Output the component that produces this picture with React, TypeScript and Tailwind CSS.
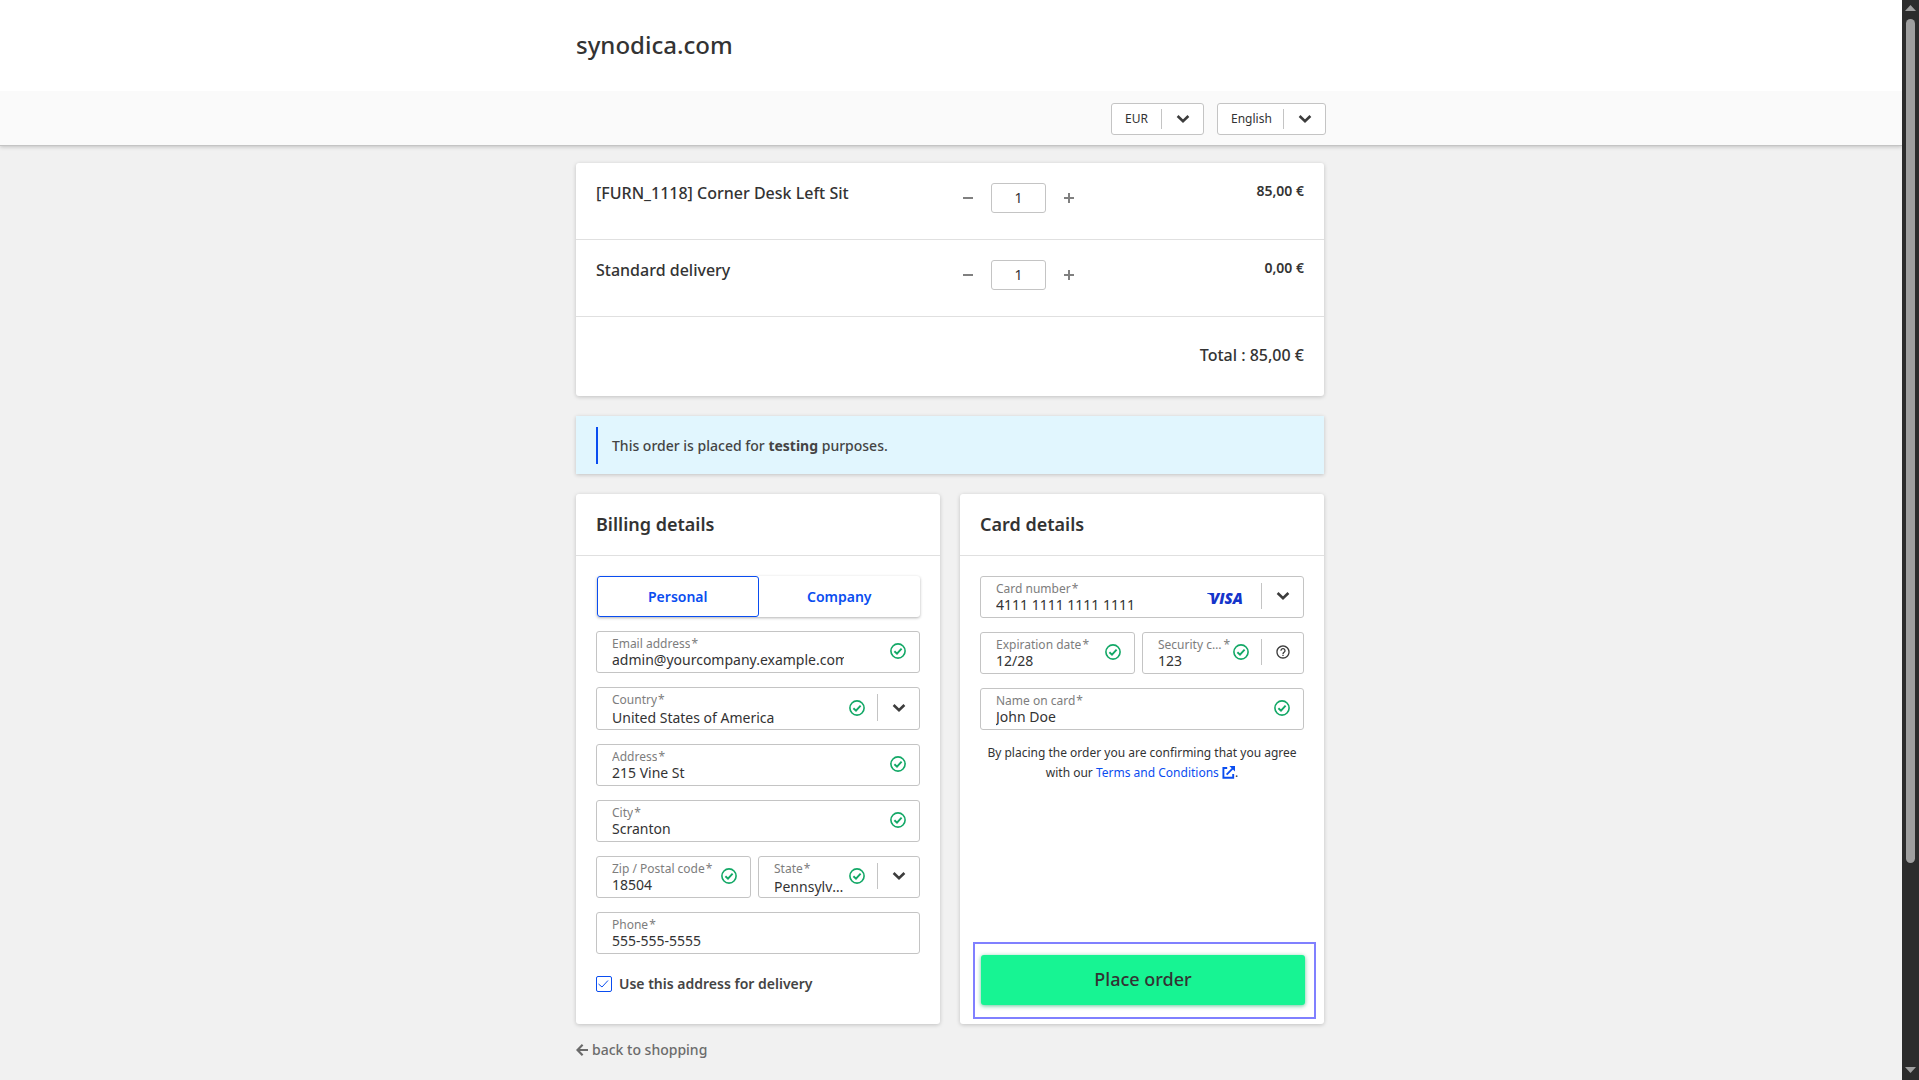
import { useState } from 'react';
import type { ReactNode } from 'react';
import { MdHelpOutline } from 'react-icons/md';

const products = [
  { id: 'desk', name: '[FURN_1118] Corner Desk Left Sit', price: '85,00 €' },
  { id: 'delivery', name: 'Standard delivery', price: '0,00 €' },
];

const Chevron = () => (
  <svg className="h-[14px] w-[14px] shrink-0" viewBox="0 0 14 14" fill="none" stroke="#3c3c3c" strokeWidth="2.6">
    <path d="M1.6 4 7 9.2l5.4-5.2" />
  </svg>
);

const Valid = () => (
  <svg className="h-4 w-4 shrink-0" viewBox="0 0 16 16" fill="none" stroke="#12a866">
    <circle cx="8" cy="8" r="7.1" strokeWidth="1.6" />
    <path d="M4.4 8.2 7 10.6l4.6-4.9" strokeWidth="1.9" />
  </svg>
);

const ArrowLeft = () => (
  <svg className="h-3 w-3" viewBox="0 0 12 12" fill="none" stroke="#6b6b6b" strokeWidth="2.2">
    <path d="M6.6.8 1.5 6l5.1 5.2M1.8 6H12" />
  </svg>
);

const ExternalLink = () => (
  <svg className="inline h-[13px] w-[13px] align-[-2px]" viewBox="0 0 13 13" fill="none" stroke="#0a4df0" strokeWidth="1.9">
    <path d="M5.2 2H1.4v9.8h9.8V8M4.6 8.6l6.2-6.2" />
    <path d="M7.4 0H13v5.6z" fill="#0a4df0" stroke="none" />
  </svg>
);

type FieldProps = {
  id: string;
  label: string;
  value: string;
  valid?: boolean;
  options?: string[];
  extra?: ReactNode;
  brand?: ReactNode;
  className?: string;
};

const Field = ({ id, label, value, valid = true, options, extra, brand, className = 'w-full' }: FieldProps) => (
  <div
    className={`flex rounded-[3px] border border-[#c4c4c4] bg-white ${
      options && className === 'w-full' ? 'h-[43px]' : 'h-[42px]'
    } ${className}`}
  >
    <div className="flex min-w-0 flex-1 flex-col pt-[3px] pl-[15px]">
      <label htmlFor={id} className="flex text-xs leading-[18px] text-[#7d7d7d]">
        <span className="truncate">{label}</span>
        <span className="pl-px">*</span>
      </label>
      {options ? (
        <select
          id={id}
          defaultValue={value}
          className="-mt-[2px] h-[22px] w-full shrink-0 appearance-none truncate bg-transparent text-sm leading-[22px] outline-none"
        >
          {options.map((option) => (
            <option key={option}>{option}</option>
          ))}
        </select>
      ) : (
        <input
          id={id}
          defaultValue={value}
          className="-mt-[2px] h-[18px] w-full bg-transparent text-sm leading-[18px] outline-none"
        />
      )}
    </div>
    {brand}
    {valid && (
      <div
        className={`flex items-center pb-[2px] ${extra ? 'pr-3' : 'pr-[13px]'} ${
          className === 'w-full' && !extra ? 'pl-[46px]' : 'pl-[3px]'
        }`}
      >
        <Valid />
      </div>
    )}
    {extra && (
      <div className="mt-[6px] mb-2 flex w-[42px] shrink-0 items-center justify-center border-l border-[#c4c4c4]">{extra}</div>
    )}
  </div>
);

const HeaderSelect = ({ label, options, className }: { label: string; options: string[]; className: string }) => (
  <div className={`flex h-8 items-center rounded-[3px] border border-[#c4c4c4] bg-white ${className}`}>
    <select aria-label={label} className="min-w-0 flex-1 appearance-none bg-transparent pl-[13px] text-xs outline-none">
      {options.map((option) => (
        <option key={option}>{option}</option>
      ))}
    </select>
    <div className="flex h-5 w-[42px] items-center justify-center border-l border-[#c4c4c4]">
      <Chevron />
    </div>
  </div>
);

const Quantity = ({ name }: { name: string }) => {
  const [count, setCount] = useState(1);

  return (
    <div className="flex h-[30px] items-center">
      <button
        aria-label={`Remove one ${name}`}
        onClick={() => setCount(Math.max(0, count - 1))}
        className="flex h-full w-[46px] items-center justify-center"
      >
        <span className="h-[2px] w-[10px] bg-[#808080]" />
      </button>
      <input
        aria-label={`Quantity of ${name}`}
        value={count}
        onChange={(e) => setCount(Number(e.target.value) || 0)}
        className="h-full w-[55px] rounded-[3px] border border-[#c4c4c4] pb-[2px] text-center text-sm outline-none"
      />
      <button
        aria-label={`Add one ${name}`}
        onClick={() => setCount(count + 1)}
        className="flex h-full w-[46px] items-center justify-center"
      >
        <svg className="h-[10px] w-[10px]" viewBox="0 0 10 10" stroke="#808080" strokeWidth="2">
          <path d="M0 5h10M5 0v10" />
        </svg>
      </button>
    </div>
  );
};

const Visa = () => (
  <div className="flex shrink-0 items-center pt-px pr-[18px]">
    <svg className="h-5 w-9" viewBox="0 0 36 20" role="img" aria-label="Visa">
      <path d="M0 5h5l2 5C5.6 7.6 3.4 6 0 5.4z" fill="#1434cb" />
      <text x="3" y="16" fontSize="15" fontWeight="800" fontStyle="italic" fontFamily="Open Sans, sans-serif" fill="#1434cb">
        VISA
      </text>
    </svg>
  </div>
);

const cardShadow = 'shadow-[0_1px_4px_rgba(0,0,0,0.2)]';

const App = () => {
  const [customer, setCustomer] = useState('Personal');

  return (
    <div className="flex h-screen bg-[#f1f1f1] font-['Noto_Sans','Open_Sans',sans-serif] text-[#333]">
      <div className="min-w-0 flex-1 overflow-hidden">
        <header className="border-b border-[#c4c4c4] bg-white shadow-[0_1px_4px_rgba(0,0,0,0.2)]">
          <div className="mx-auto flex h-[91px] max-w-[750px] items-center pb-[2px]">
            <h1 className="text-2xl font-medium">synodica.com</h1>
          </div>
          <div className="bg-[#fafafa]">
            <div className="mx-auto flex h-[54px] max-w-[750px] items-center justify-end gap-[13px] pt-[2px]">
              <HeaderSelect label="Currency" options={['EUR', 'USD']} className="w-[93px]" />
              <HeaderSelect label="Language" options={['English', 'Français']} className="w-[109px]" />
            </div>
          </div>
        </header>

        <main className="mx-auto max-w-[750px] pt-[17px] pr-[2px]">
          <section className={`rounded-[3px] bg-white ${cardShadow}`}>
            {products.map((product) => (
              <div key={product.id} className="grid h-[77px] grid-cols-[349px_147px_1fr] border-b border-[#e0e0e0] px-5 pt-5">
                <h2 className="font-medium leading-5">{product.name}</h2>
                <Quantity name={product.name} />
                <p className="text-right text-sm font-semibold leading-4">{product.price}</p>
              </div>
            ))}
            <p className="flex h-[79px] items-center justify-end px-5 pb-1 font-medium">Total : 85,00 €</p>
          </section>

          <section className={`mt-5 bg-[#e1f6fe] px-5 pt-[11px] pb-[10px] ${cardShadow}`}>
            <p className="border-l-2 border-[#0a4df0] pl-[14px] text-sm font-medium leading-[37px] text-[#444]">
              This order is placed for <strong className="font-bold">testing</strong> purposes.
            </p>
          </section>

          <form className="mt-5 grid grid-cols-2 gap-5" onSubmit={(e) => e.preventDefault()}>
            <section className={`rounded-[3px] bg-white ${cardShadow}`}>
              <h2 className="border-b border-[#e0e0e0] px-5 text-lg font-semibold leading-[61px]">Billing details</h2>
              <div className="flex flex-col gap-[14px] px-5 pt-5 pb-7">
                <div className="ml-px flex h-[41px] rounded-[3px] shadow-[0_1px_3px_rgba(0,0,0,0.3)]">
                  {['Personal', 'Company'].map((type) => (
                    <button
                      key={type}
                      type="button"
                      onClick={() => setCustomer(type)}
                      className={`flex-1 rounded-[3px] border text-sm font-semibold text-[#0a4df0] ${
                        customer === type ? 'border-[#0a4df0]' : 'border-transparent'
                      }`}
                    >
                      {type}
                    </button>
                  ))}
                </div>
                <Field id="email" label="Email address" value="admin@yourcompany.example.com" />
                <Field
                  id="country"
                  label="Country"
                  value="United States of America"
                  options={['United States of America', 'Belgium', 'France']}
                  extra={<Chevron />}
                />
                <Field id="address" label="Address" value="215 Vine St" />
                <Field id="city" label="City" value="Scranton" />
                <div className="flex gap-[7px]">
                  <Field id="zip" label="Zip / Postal code" value="18504" className="w-[155px]" />
                  <Field
                    id="state"
                    label="State"
                    value="Pennsylvania"
                    options={['Pennsylvania', 'New York', 'Ohio']}
                    extra={<Chevron />}
                    className="w-[162px]"
                  />
                </div>
                <Field id="phone" label="Phone" value="555-555-5555" valid={false} />
                <label className="mt-1 flex items-center gap-[7px] text-sm font-semibold leading-6 text-[#444]">
                  <span className="grid h-4 w-4">
                    <input
                      type="checkbox"
                      defaultChecked
                      className="peer col-start-1 row-start-1 appearance-none rounded-[2px] border border-[#0a4df0]"
                    />
                    <svg
                      className="pointer-events-none invisible col-start-1 row-start-1 peer-checked:visible"
                      viewBox="0 0 16 16"
                      fill="none"
                      stroke="#0a4df0"
                    >
                      <path d="M2.5 8 6 11l6-6.5" />
                    </svg>
                  </span>
                  Use this address for delivery
                </label>
              </div>
            </section>

            <section className={`flex flex-col rounded-[3px] bg-white ${cardShadow}`}>
              <h2 className="border-b border-[#e0e0e0] px-5 text-lg font-semibold leading-[61px]">Card details</h2>
              <div className="flex flex-1 flex-col gap-[14px] px-5 pt-5 pb-[5px]">
                <Field
                  id="card"
                  label="Card number"
                  value="4111 1111 1111 1111"
                  valid={false}
                  brand={<Visa />}
                  extra={<Chevron />}
                />
                <div className="flex gap-[7px]">
                  <Field id="expiry" label="Expiration date" value="12/28" className="w-[155px]" />
                  <Field
                    id="cvc"
                    label="Security code"
                    value="123"
                    extra={<MdHelpOutline className="h-4 w-4 text-[#3c3c3c]" />}
                    className="w-[162px]"
                  />
                </div>
                <Field id="holder" label="Name on card" value="John Doe" />
                <p className="-mt-px text-center text-xs leading-5">
                  By placing the order you are confirming that you agree with our{' '}
                  <a href="#terms" className="text-[#0a4df0]">
                    Terms and Conditions <ExternalLink />
                  </a>
                  .
                </p>
                <div className="mt-auto -mr-3 -ml-[7px] border-2 border-[#8080ff] pt-[11px] pr-[9px] pb-3 pl-[6px]">
                  <button className="h-[50px] w-full rounded-[3px] bg-[#17f493] pb-[2px] text-lg font-medium shadow-[0_1px_4px_rgba(0,160,90,0.6)]">
                    Place order
                  </button>
                </div>
              </div>
            </section>
          </form>

          <a href="#shop" className="mt-4 flex items-center gap-1 text-sm font-medium leading-5 text-[#6b6b6b]">
            <ArrowLeft />
            back to shopping
          </a>
        </main>
      </div>

      <div aria-hidden="true" className="flex w-[17px] shrink-0 flex-col items-center bg-[#2c2c2c]">
        <svg className="h-[19px] w-[11px] shrink-0" viewBox="0 0 11 19" fill="#9f9f9f">
          <path d="M5.5 5 11 11H0z" />
        </svg>
        <div className="flex-1">
          <div className="h-[81%] w-[9px] rounded-full bg-[#9f9f9f]" />
        </div>
        <svg className="h-[19px] w-[11px] shrink-0" viewBox="0 0 11 19" fill="#9f9f9f">
          <path d="M5.5 12 11 6H0z" />
        </svg>
      </div>
    </div>
  );
};

export default App;
